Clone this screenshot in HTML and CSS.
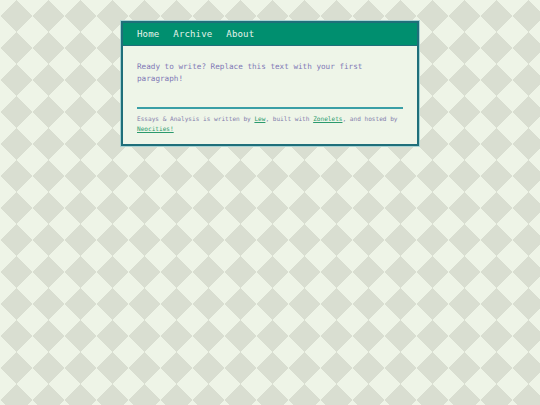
FILE: index.html
```html
<!DOCTYPE html>
<html lang="en">
<head>
<meta charset="utf-8">
<title>Essays &amp; Analysis</title>
<link rel="stylesheet" href="styles.css">
</head>
<body>
<div class="container">
  <nav class="nav">
    <a href="#" class="nav-link">Home</a>
    <a href="#" class="nav-link">Archive</a>
    <a href="#" class="nav-link">About</a>
  </nav>
  <main class="content">
    <p class="intro">Ready to write? Replace this text with your first paragraph!</p>
    <hr class="rule">
    <footer class="footer">Essays &amp; Analysis is written by <a href="#" class="flink">Lew</a>, built with <a href="#" class="flink">Zonelets</a>, and hosted by <a href="#" class="flink">Neocities!</a></footer>
  </main>
</div>
</body>
</html>
```
FILE: styles.css
```css
html, body {
  margin: 0;
  padding: 0;
}
body {
  min-height: 405px;
  background-color: #d9ded1;
  background-image:
    linear-gradient(135deg, #eef4e7 25%, transparent 25%),
    linear-gradient(225deg, #eef4e7 25%, transparent 25%),
    linear-gradient(315deg, #eef4e7 25%, transparent 25%),
    linear-gradient(45deg, #eef4e7 25%, transparent 25%);
  background-size: 32px 32px;
  font-family: "DejaVu Sans Mono", "Liberation Mono", monospace;
}
.container {
  width: 294px;
  margin: 21px auto 0;
  border: 2px solid #1f6f7a;
  box-shadow: 0 0 0 1px #a9d4d4;
  background: #eef5e8;
}
.nav {
  display: flex;
  gap: 14px;
  height: 22px;
  align-items: center;
  padding: 0 14px;
  background: #008f6f;
  border-bottom: 1px solid #1f6f7a;
}
.nav-link {
  color: #e4f3ea;
  text-decoration: none;
  font-size: 9.1px;
  line-height: 12px;
  letter-spacing: 0.1px;
}
.content {
  padding: 15px 14px 10px;
}
.intro {
  margin: 0;
  font-size: 7.65px;
  line-height: 12px;
  color: #8078b6;
}
.rule {
  margin: 22px 0 5px;
  border: 0;
  height: 2px;
  background: #3a9fa6;
}
.footer {
  font-size: 6.1px;
  line-height: 10px;
  color: #847eac;
}
.flink {
  color: #2a9a6c;
}
```
